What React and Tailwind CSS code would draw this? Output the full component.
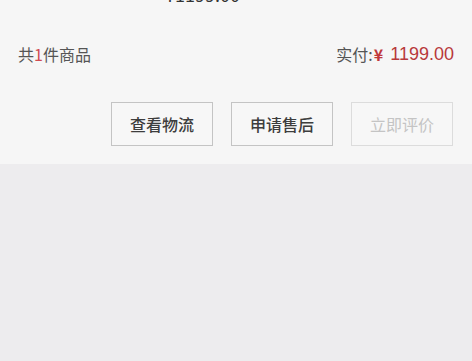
import React from 'react';

const font = { fontFamily: '"Noto Sans CJK SC", "Noto Sans", sans-serif' };

const Button = ({ children, disabled }) => (
    <button
        className={
            disabled
                ? 'w-[102px] h-[44px] border border-[#dcdcdc] text-[#c4c4c4] text-[16px] bg-[#f7f7f7]'
                : 'w-[102px] h-[44px] border border-[#c4c4c4] text-[#3d3d3d] text-[16px] font-medium bg-[#f7f7f7]'
        }
    >
        {children}
    </button>
);

const App = () => {
    return (
        <div className="min-h-screen bg-[#edecee]" style={font}>
            <div className="bg-[#f6f6f6] pb-[18px]">
                <div className="h-[4px] overflow-hidden flex items-end justify-between pl-[165px] pr-[22px]">
                    <span className="text-[18px] leading-[20px] text-[#333] shrink-0">¥1199.00</span>
                    <span className="text-[14px] leading-[20px] text-[#666] shrink-0">x1</span>
                </div>
                <div className="flex justify-between items-center px-[18px] mt-[38px] h-[24px] text-[16px] text-[#555]">
                    <p>
                        共<span className="text-[#d04a50]">1</span>件商品
                    </p>
                    <p className="flex items-center">
                        实付:<span className="text-[#c0383c] font-bold ml-[1px]">¥</span>
                        <span className="text-[#b8393b] ml-[7px] text-[18px]" style={{ fontFamily: '"Liberation Sans", Arial, sans-serif' }}>
                            1199.00
                        </span>
                    </p>
                </div>
                <div className="flex justify-end gap-[18px] pr-[19px] mt-[36px]">
                    <Button>查看物流</Button>
                    <Button>申请售后</Button>
                    <Button disabled>立即评价</Button>
                </div>
            </div>
        </div>
    );
};

export default App;
